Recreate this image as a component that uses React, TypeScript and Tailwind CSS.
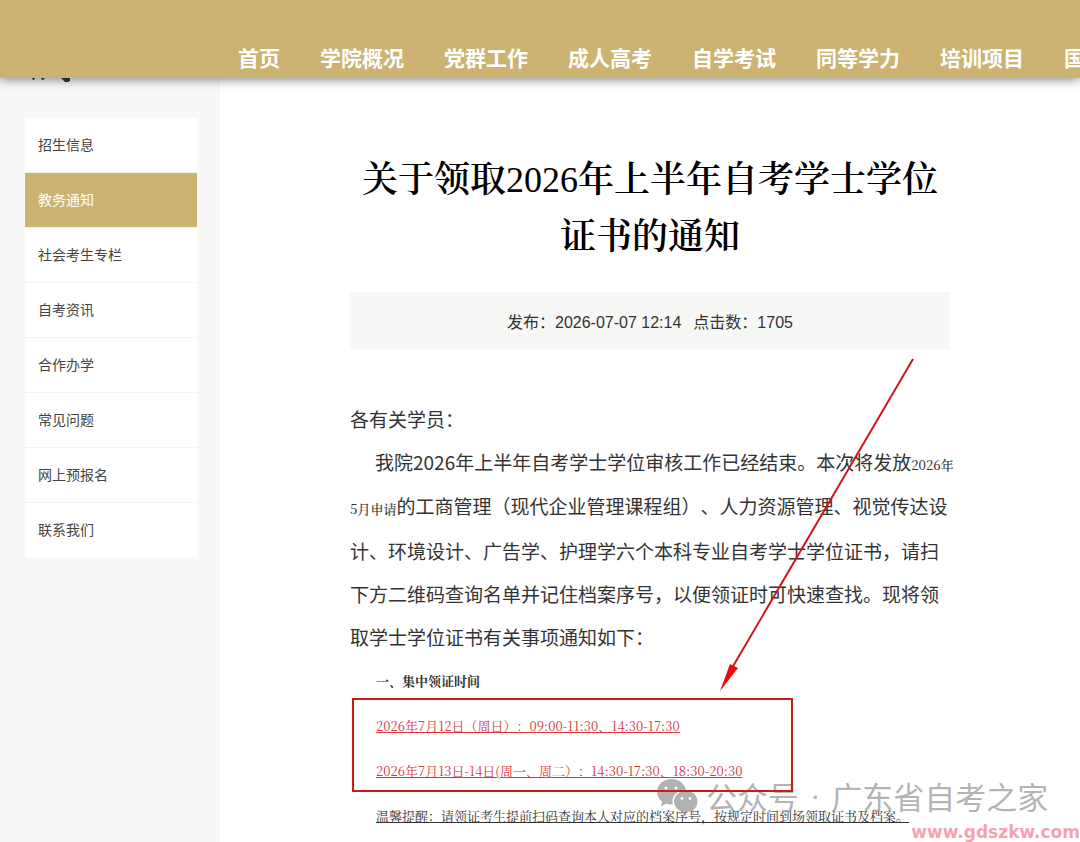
const navItems = ['首页', '学院概况', '党群工作', '成人高考', '自学考试', '同等学力', '培训项目', '国'];

const sideItems = ['招生信息', '教务通知', '社会考生专栏', '自考资讯', '合作办学', '常见问题', '网上预报名', '联系我们'];

const sans = "font-['Noto_Sans_CJK_SC',sans-serif]";
const serif = "font-['Noto_Serif_CJK_SC','Liberation_Serif','Noto_Sans_CJK_SC',serif]";

function Header() {
  return (
    <header className="relative z-10 flex h-[78px] items-end bg-[#ccb371] shadow-[0_2px_10px_rgba(0,0,0,0.45)]">
      <nav aria-label="主导航" className="w-full overflow-hidden pb-[5px] pl-[238px]">
        <ul className="flex gap-10 whitespace-nowrap text-[21px] font-bold leading-[32px] text-white">
          {navItems.map((item) => (
            <li key={item} className="shrink-0">
              <a href="#">{item}</a>
            </li>
          ))}
        </ul>
      </nav>
    </header>
  );
}

function Sidebar() {
  return (
    <aside className="w-[220px] shrink-0 bg-[#f8f8f8] pl-[25px] pr-[23px]">
      <svg className="relative z-20 h-10 w-[50px]" viewBox="0 0 50 40" fill="#1c3326" aria-hidden="true">
        <path d="M7 0h3l-1 2H8zM16 0h4l-2 2h-1zM36 0h9v3l-2 1h-3l-2-2z" />
      </svg>
      <ul className="divide-y divide-[#f4f4f4] bg-white text-sm text-[#444]">
        {sideItems.map((item) => (
          <li key={item}>
            <a
              href="#"
              className={
                item === '教务通知'
                  ? 'block bg-[#ccb371] px-[13px] pb-0.5 leading-[52px] text-white'
                  : 'block px-[13px] pb-0.5 leading-[52px]'
              }
            >
              {item}
            </a>
          </li>
        ))}
      </ul>
    </aside>
  );
}

function Annotations() {
  return (
    <>
      <svg className="pointer-events-none absolute left-[370px] top-[276px]" width="200" height="340" viewBox="0 0 200 340" aria-hidden="true">
        <line x1="193" y1="5" x2="12" y2="314" stroke="#d0161b" strokeWidth="2" />
        <path d="M0 337 10 310l8 4z" fill="#e60c10" />
      </svg>
      <div className="pointer-events-none absolute left-[306px] top-[698px] flex items-center whitespace-nowrap text-[31px] leading-[40px] text-[#888]/65">
        <svg className="mr-2" width="42" height="36" viewBox="0 0 42 36" aria-hidden="true">
          <path
            fill="currentColor"
            fillRule="evenodd"
            d="M15.500 1C7.500 1 1 6.800 1 14c0 3.900 2 7.200 5.200 9.600L5 28.500l5-2.700c1.700.5 3.500.8 5.500.8h1.300C14.800 18 21 11.700 30 11.900 28.500 5.500 22.500 1 15.500 1zM10 8.500a1.500 1.500 0 1 1 0 3 1.500 1.500 0 0 1 0-3zm10 0a1.500 1.500 0 1 1 0 3 1.500 1.500 0 0 1 0-3z"
          />
          <path
            fill="currentColor"
            fillRule="evenodd"
            d="M30 13c-6.800 0-12 4.700-12 10.500s5.200 10.500 12 10.500c1.500 0 3-.3 4.300-.7l4 2.200-1.100-3.700c2.700-1.900 4.300-4.900 4.300-8.300C41.500 17.700 36.800 13 30 13zM26 19a1.400 1.400 0 1 1 0 2.800 1.400 1.400 0 0 1 0-2.800zm8 0a1.400 1.400 0 1 1 0 2.800 1.400 1.400 0 0 1 0-2.800z"
          />
        </svg>
        <span>公众号</span>
        <span className="px-[11px] font-['Liberation_Sans',sans-serif]">·</span>
        <span>广东省自考之家</span>
      </div>
    </>
  );
}

function Article() {
  return (
    <article className="relative ml-[130px] w-[600px] shrink-0 text-[#333]">
      <h1 className={`${serif} pt-[70px] text-center text-[36px] font-semibold leading-[57px] text-black`}>
        关于领取
        <span className="font-['Liberation_Serif',serif] font-medium leading-none">2026</span>
        年上半年自考学士学位
        <br />
        证书的通知
      </h1>
      <p className="mt-[30px] flex justify-center gap-3 bg-[#f7f7f5] pt-1 font-['Liberation_Sans','Noto_Sans_CJK_SC',sans-serif] text-base leading-[54px]">
        <span>发布：2026-07-07 12:14</span>
        <span>点击数：1705</span>
      </p>
      <div className="mt-[47px] whitespace-nowrap text-[19px] leading-[43px]">
        <p>各有关学员：</p>
        <p>
          <span className="block pl-[25px]">
            我院2026年上半年自考学士学位审核工作已经结束。本次将发放
            <span className={`${serif} text-[13px] font-medium leading-none`}>2026年</span>
          </span>
          <span className="block leading-[46px]">
            <span className={`${serif} text-[13px] font-medium leading-none`}>5月申请</span>
            的工商管理（现代企业管理课程组）、人力资源管理、视觉传达设
          </span>
          <span className="block">计、环境设计、广告学、护理学六个本科专业自考学士学位证书，请扫</span>
          <span className="block">下方二维码查询名单并记住档案序号，以便领证时可快速查找。现将领</span>
          <span className="block">取学士学位证书有关事项通知如下：</span>
        </p>
      </div>
      <div className={`${serif} whitespace-nowrap pl-[26px] text-[13px] leading-[45px]`}>
        <h2 className="font-bold">一、集中领证时间</h2>
        <div className="relative text-[#d8383a] underline">
          <p>2026年7月12日（周日）：09:00-11:30、14:30-17:30</p>
          <p>2026年7月13日-14日(周一、周二）：14:30-17:30、18:30-20:30</p>
          <div className="pointer-events-none absolute -left-6 -top-[5px] bottom-px z-10 w-[441px] border-2 border-[#cc1a1a]" />
        </div>
        <p className="underline">温馨提醒：请领证考生提前扫码查询本人对应的档案序号，按规定时间到场领取证书及档案。</p>
      </div>
      <Annotations />
    </article>
  );
}

export default function App() {
  return (
    <div className={`${sans} relative flex min-h-screen flex-col overflow-hidden bg-white [text-spacing-trim:space-all]`}>
      <Header />
      <main className="flex flex-1">
        <Sidebar />
        <Article />
      </main>
      <a
        href="#"
        className="absolute bottom-0 right-0 font-['DejaVu_Sans',sans-serif] text-[17px] font-bold leading-[20px] text-[#f5a3b1]"
      >
        www.gdszkw.com
      </a>
    </div>
  );
}
